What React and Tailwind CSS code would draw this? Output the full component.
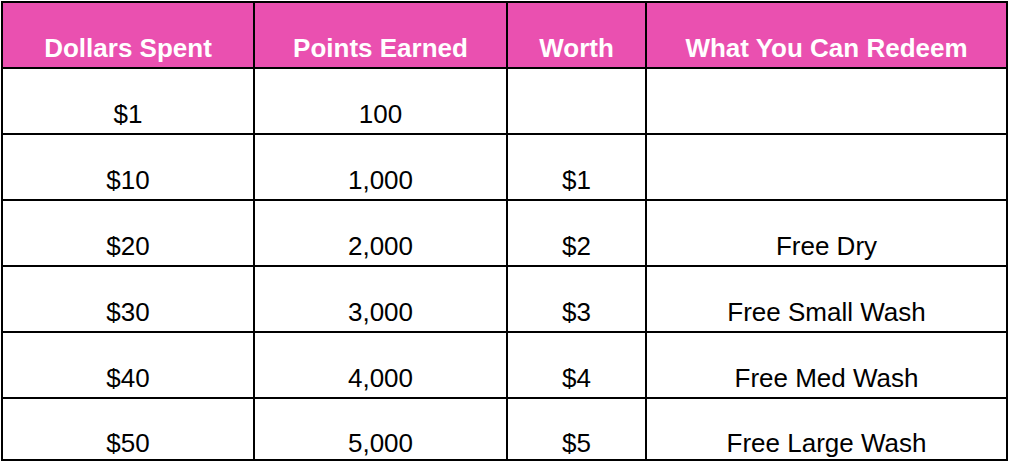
const headers = ["Dollars Spent", "Points Earned", "Worth", "What You Can Redeem"];
const rows = [
  ["$1", "100", "", ""],
  ["$10", "1,000", "$1", ""],
  ["$20", "2,000", "$2", "Free Dry"],
  ["$30", "3,000", "$3", "Free Small Wash"],
  ["$40", "4,000", "$4", "Free Med Wash"],
  ["$50", "5,000", "$5", "Free Large Wash"],
];

export default function App() {
  return (
    <div className="w-[1010px] h-[466px] bg-white pl-[1px] pt-[1px]" style={{ fontFamily: '"Liberation Sans", Arial, sans-serif' }}>
      <div className="grid w-[1007px] grid-cols-[250px_251px_137px_359px] grid-rows-[64px_64px_64px_64px_64px_64px_60px] gap-[2px] bg-black p-[2px]">
        {headers.map((h) => (
          <div key={h} className="flex items-end justify-center bg-[#ea50b0] pb-[6px] text-[26px] leading-[26px] font-bold text-white">
            {h}
          </div>
        ))}
        {rows.map((r, i) =>
          r.map((c, j) => (
            <div
              key={i + "-" + j}
              className={
                "flex items-end justify-center bg-white text-[26px] leading-[26px] text-black " +
                (i === rows.length - 1 ? "pb-[3px]" : "pb-[6px]")
              }
            >
              {c}
            </div>
          ))
        )}
      </div>
    </div>
  );
}
